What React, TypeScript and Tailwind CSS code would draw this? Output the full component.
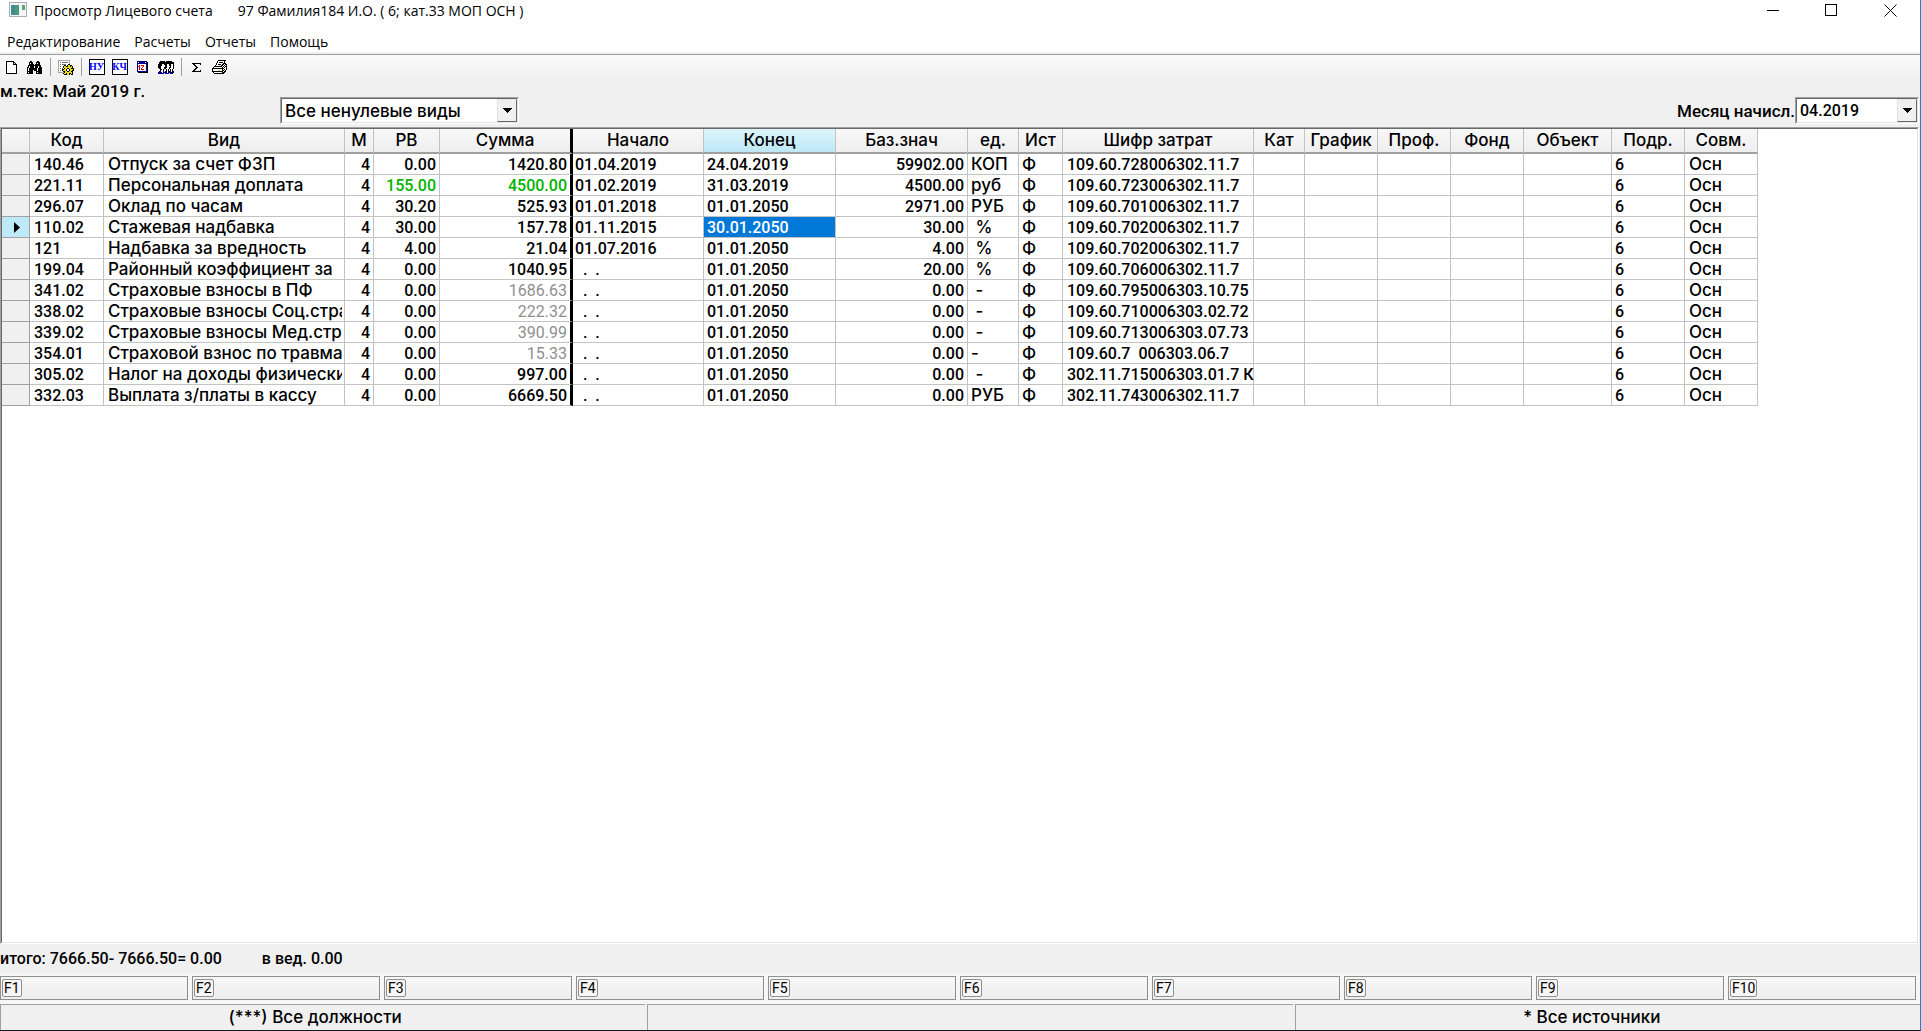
import React from 'react';

type Row = {
  code: string;
  name: string;
  pv: string;
  sum: string;
  start: string;
  end: string;
  base: string;
  unit: string;
  cipher: string;
  tone?: 'green' | 'gray';
};

const NO_DATE = '  .  .';

const rows: Row[] = [
  { code: '140.46', name: 'Отпуск за счет ФЗП', pv: '0.00', sum: '1420.80', start: '01.04.2019', end: '24.04.2019', base: '59902.00', unit: 'КОП', cipher: '109.60.728006302.11.7' },
  { code: '221.11', name: 'Персональная доплата', pv: '155.00', sum: '4500.00', start: '01.02.2019', end: '31.03.2019', base: '4500.00', unit: 'руб', cipher: '109.60.723006302.11.7', tone: 'green' },
  { code: '296.07', name: 'Оклад по часам', pv: '30.20', sum: '525.93', start: '01.01.2018', end: '01.01.2050', base: '2971.00', unit: 'РУБ', cipher: '109.60.701006302.11.7' },
  { code: '110.02', name: 'Стажевая надбавка', pv: '30.00', sum: '157.78', start: '01.11.2015', end: '30.01.2050', base: '30.00', unit: ' %', cipher: '109.60.702006302.11.7' },
  { code: '121', name: 'Надбавка за вредность', pv: '4.00', sum: '21.04', start: '01.07.2016', end: '01.01.2050', base: '4.00', unit: ' %', cipher: '109.60.702006302.11.7' },
  { code: '199.04', name: 'Районный коэффициент за', pv: '0.00', sum: '1040.95', start: NO_DATE, end: '01.01.2050', base: '20.00', unit: ' %', cipher: '109.60.706006302.11.7' },
  { code: '341.02', name: 'Страховые взносы в ПФ', pv: '0.00', sum: '1686.63', start: NO_DATE, end: '01.01.2050', base: '0.00', unit: ' -', cipher: '109.60.795006303.10.75', tone: 'gray' },
  { code: '338.02', name: 'Страховые взносы Соц.стра', pv: '0.00', sum: '222.32', start: NO_DATE, end: '01.01.2050', base: '0.00', unit: ' -', cipher: '109.60.710006303.02.72', tone: 'gray' },
  { code: '339.02', name: 'Страховые взносы Мед.стра', pv: '0.00', sum: '390.99', start: NO_DATE, end: '01.01.2050', base: '0.00', unit: ' -', cipher: '109.60.713006303.07.73', tone: 'gray' },
  { code: '354.01', name: 'Страховой взнос по травма', pv: '0.00', sum: '15.33', start: NO_DATE, end: '01.01.2050', base: '0.00', unit: '-', cipher: '109.60.7  006303.06.7', tone: 'gray' },
  { code: '305.02', name: 'Налог на доходы физически', pv: '0.00', sum: '997.00', start: NO_DATE, end: '01.01.2050', base: '0.00', unit: ' -', cipher: '302.11.715006303.01.7 К' },
  { code: '332.03', name: 'Выплата з/платы в кассу', pv: '0.00', sum: '6669.50', start: NO_DATE, end: '01.01.2050', base: '0.00', unit: 'РУБ', cipher: '302.11.743006302.11.7' },
];

const columns = [
  { title: '', width: 'w-[28px]' },
  { title: 'Код', width: 'w-[74px]' },
  { title: 'Вид', width: 'w-[241px]' },
  { title: 'М', width: 'w-[29px]' },
  { title: 'РВ', width: 'w-[66px]' },
  { title: 'Сумма', width: 'w-[133px]' },
  { title: 'Начало', width: 'w-[131px]' },
  { title: 'Конец', width: 'w-[132px]' },
  { title: 'Баз.знач', width: 'w-[132px]' },
  { title: 'ед.', width: 'w-[51px]' },
  { title: 'Ист', width: 'w-[44px]' },
  { title: 'Шифр затрат', width: 'w-[191px]' },
  { title: 'Кат', width: 'w-[51px]' },
  { title: 'График', width: 'w-[73px]' },
  { title: 'Проф.', width: 'w-[73px]' },
  { title: 'Фонд', width: 'w-[73px]' },
  { title: 'Объект', width: 'w-[88px]' },
  { title: 'Подр.', width: 'w-[73px]' },
  { title: 'Совм.', width: 'w-[73px]' },
];

const menu = ['Редактирование', 'Расчеты', 'Отчеты', 'Помощь'];
const fKeys = ['F1', 'F2', 'F3', 'F4', 'F5', 'F6', 'F7', 'F8', 'F9', 'F10'];

const wide = 'font-[Inter,sans-serif] text-[17px]';
const cellBase = 'h-[21px] p-0 border-b border-r border-[#c3c3c3] whitespace-pre';
const cell = `${cellBase} pt-0.5 leading-[18px]`;
const textCell = `${cellBase} leading-5 ${wide}`;
const sunken = 'border border-t-[#a0a0a0] border-l-[#a0a0a0] border-r-white border-b-white';
const sunkenInner = 'border border-t-[#696969] border-l-[#696969] border-r-[#e3e3e3] border-b-[#e3e3e3]';

const palette: Record<string, string> = {
  k: '#000000',
  w: '#ffffff',
  g: '#a8a8a8',
  d: '#707070',
  y: '#e8dc20',
  b: '#000090',
  r: '#d00000',
};

const pageArt = [
  'kkkkkkkk....',
  'kwwwwwwkk...',
  'kwwwwwwkwk..',
  'kwwwwwwkkkk.',
  'kwwwwwwwwwk.',
  'kwwwwwwwwwk.',
  'kwwwwwwwwwk.',
  'kwwwwwwwwwk.',
  'kwwwwwwwwwk.',
  'kwwwwwwwwwk.',
  'kwwwwwwwwwk.',
  'kwwwwwwwwwk.',
  'kkkkkkkkkkk.',
];

const binocularsArt = [
  '...kk.....kk...',
  '..kkkk...kkkk..',
  '..kwkk...kwkk..',
  '..kkkkk.kkkkk..',
  '.kkkkkkkkkkkkk.',
  '.kwkkkkwkkkwkk.',
  'kkwkkkkwkkkwkkk',
  'kwkkkkkkkkwkkkk',
  'kwkkkkkkkkwkkkk',
  'kwkkkk.kkkwkkkk',
  'kkkkkk...kkkkkk',
  'kwkkkk...kwkkkk',
  'kkkkkk...kkkkkk',
];

const docGearArt = [
  'gggggggggggg....',
  'gwwwwwwwwwwg....',
  'gwdwddddddwg....',
  'gwwwwwwwwwwg....',
  'gwdwddddwwkk....',
  'gwwwwwkkwkyykk..',
  'gwdwwkyykkyykyk.',
  'gwwwwkyyyyyyyyk.',
  'gwdwdwkyykkyykkk',
  'gwwwkkyykwwkyyyk',
  'gwdwkyyykwwkyykk',
  'gwwwwkkyykkyykk.',
  'ggggggkyyyyyyyk.',
  '.....kyykyykkyk.',
  '......kkkyyk.kk.',
];

const calendarArt = [
  'bbbbbbbbbb.',
  'bwbbbbbbwbk',
  'bbbbbbbbbbk',
  'bwwwwwwwwbk',
  'bwrwrrrwwbk',
  'brrwwwrwwbk',
  'bwrwwrwwwbk',
  'bwrwrwwwwbk',
  'bwrwrrrwwbk',
  'bwwwwwwwwbk',
  'bbbbbbbbbbk',
  '.kkkkkkkkkk',
];

const peopleArt = [
  '..kkkkk.kkkkkk..',
  '.kkkkkkkkkkkkkkk',
  '.kkkkkkkkkkkkkkk',
  'kkkkwwkkkwwkkwwk',
  'kkkkwwwkkwwkkwwk',
  'kkkwwwwkkwwwkwwk',
  'kkkwwwkkkwwkkwwk',
  '.kkwwwkkwwwkwwwk',
  '..kkwk..kwk.kwk.',
  '..kwwk..kwk.kwk.',
  '.bbwwk.bkwkbkwkb',
  'bbbbwkbbbwkbbkkb',
  'bbbbbb.bbbb.bbb.',
];

const sumArt = [
  'kkkkkkkkk',
  '.kk.....k',
  '..kk.....',
  '...kk....',
  '....kk...',
  '...kk....',
  '..kk.....',
  '.kk.....k',
  'kkkkkkkkk',
];

const printerArt = [
  '......kkkkkkkk..',
  '.....kwwwwwwk...',
  '.....kwkkkkwk...',
  '....kwwwwwwkkk..',
  '....kwkkkwkkwkk.',
  '...kwwwwwkkwkwk.',
  '..kkkkkkkkwkwkk.',
  '.kwwwwwwwwkwkwk.',
  'kkkkkkkkkkkkwwk.',
  'kwwwwwwwwwkwkwk.',
  'kwwwwwyywwkkwk..',
  'kkkkkkkkkkkwkk..',
  '.kwwwwwwwwkkk...',
  '..kkkkkkkkkk....',
];

const PixelIcon: React.FC<{ art: string[] }> = ({ art }) => (
  <svg width={art[0].length} height={art.length} shapeRendering="crispEdges">
    {art.flatMap((line, y) =>
      line.split('').map((ch, x) =>
        ch === '.' ? null : <rect key={`${x}-${y}`} x={x} y={y} width="1" height="1" fill={palette[ch]} />
      )
    )}
  </svg>
);

const ToolButton: React.FC<{ label: string; children: React.ReactNode }> = ({ label, children }) => (
  <button aria-label={label} className="flex h-6 w-[23px] items-center justify-center">
    {children}
  </button>
);

const Separator = () => (
  <div className="flex w-2 justify-center">
    <div className="h-[18px] w-px bg-[#a0a0a0]" />
  </div>
);

const LetterIcon: React.FC<{ text: string }> = ({ text }) => (
  <span className="flex h-4 w-4 items-center justify-center border border-black bg-white font-['Liberation_Serif',serif] text-[10px] leading-none font-bold text-[#0000ff]">
    {text}
  </span>
);

const ComboBox: React.FC<{ id: string; value: string; width: string; font?: string; label?: string }> = ({
  id,
  value,
  width,
  font = '',
  label,
}) => (
  <div className={`relative ${width} ${sunken}`}>
    <select
      id={id}
      aria-label={label}
      className={`block h-[25px] w-full appearance-none bg-white pt-px pl-[3px] leading-5 outline-none ${font} ${sunkenInner}`}
    >
      <option>{value}</option>
    </select>
    <span className="pointer-events-none absolute top-px right-px flex h-[23px] w-5 items-center justify-center border border-t-[#e3e3e3] border-r-[#696969] border-b-[#696969] border-l-[#e3e3e3] bg-[#f0f0f0]">
      <svg width="9" height="5" viewBox="0 0 9 5" shapeRendering="crispEdges">
        <path d="M0 0h9v1H8v1H7v1H6v1H5v1H4V4H3V3H2V2H1V1H0z" />
      </svg>
    </span>
  </div>
);

const DataGrid = () => (
  <table className="w-px table-fixed border-separate border-spacing-0">
    <colgroup>
      {columns.map((c, i) => (
        <col key={i} className={c.width} />
      ))}
    </colgroup>
    <thead>
      <tr>
        {columns.map((c, i) => (
          <th
            key={i}
            className={`h-[25px] border-b-2 border-b-[#a0a0a0] p-0 pb-0.5 text-center leading-5 font-medium whitespace-nowrap ${wide} ${
              i === 5 ? 'border-r-[3px] border-r-black' : 'border-r border-r-[#c3c3c3]'
            } ${i === 7 ? 'bg-linear-to-b from-[#ddf5fc] to-[#bde8f6]' : 'bg-linear-to-b from-[#f8f8f8] to-[#eeeeee]'}`}
          >
            {c.title}
          </th>
        ))}
      </tr>
    </thead>
    <tbody>
      {rows.map((r, i) => {
        const current = i === 3;
        return (
          <tr key={r.code}>
            <td className={`h-[21px] border-r border-b border-[#a0a0a0] p-0 ${current ? 'bg-[#bde9f8]' : 'bg-[#f0f0f0]'}`}>
              {current && (
                <svg className="ml-3" width="6" height="11" viewBox="0 0 6 11">
                  <path d="M0 0l6 5.5L0 11z" />
                </svg>
              )}
            </td>
            <td className={`${cell} pl-1`}>{r.code}</td>
            <td className={`${textCell} pl-1`}>
              <div className="mr-0.5 overflow-x-clip">{r.name}</div>
            </td>
            <td className={`${cell} pr-[3px] text-right`}>4</td>
            <td className={`${cell} pr-[3px] text-right ${r.tone === 'green' ? 'text-[#00b400]' : ''}`}>{r.pv}</td>
            <td
              className={`h-[21px] border-r-[3px] border-b border-r-black border-b-[#c3c3c3] p-0 pt-0.5 pr-[3px] text-right leading-[18px] ${
                r.tone === 'green' ? 'text-[#00b400]' : r.tone === 'gray' ? 'font-normal text-[#8f8f8f]' : ''
              }`}
            >
              {r.sum}
            </td>
            <td className={`${cell} pl-0.5`}>{r.start}</td>
            <td className={`${cell} pl-[3px] ${current ? 'bg-[#0078d7] text-white' : ''}`}>{r.end}</td>
            <td className={`${cell} pr-[3px] text-right`}>{r.base}</td>
            <td className={`${textCell} pl-[3px]`}>{r.unit}</td>
            <td className={`${textCell} pl-[3px]`}>Ф</td>
            <td className={`${cell} pl-1`}>{r.cipher}</td>
            <td className={cell} />
            <td className={cell} />
            <td className={cell} />
            <td className={cell} />
            <td className={cell} />
            <td className={`${cell} pl-[3px]`}>6</td>
            <td className={`${textCell} pl-1`}>Осн</td>
          </tr>
        );
      })}
    </tbody>
  </table>
);

const App: React.FC = () => {
  return (
    <div className="flex h-screen flex-col border-r border-b border-r-[#1a84dc] border-b-[#0c1c2c] bg-[#f0f0f0] font-[Roboto,sans-serif] text-[16px] font-medium text-black">
      <header className="bg-white font-['Open_Sans',sans-serif] text-[14px] font-normal">
        <div className="flex h-5 items-center">
          <svg className="ml-[9px] h-4 w-[18px]" viewBox="0 0 18 16">
            <rect x="0.5" y="0.5" width="17" height="14" fill="#f4f6f7" stroke="#a9b0b4" />
            <rect x="2" y="3" width="8" height="10" fill="#4a9a7c" />
            <rect x="2" y="3" width="4" height="10" fill="#3d7fa0" opacity="0.5" />
            <rect x="13" y="3" width="3" height="5" fill="#5aa86e" />
          </svg>
          <h1 className="ml-[7px]">Просмотр Лицевого счета</h1>
          <span className="ml-[25px]">97 Фамилия184 И.О. ( 6; кат.33 МОП ОСН )</span>
          <div className="ml-auto flex">
            <button aria-label="Свернуть" className="flex h-5 w-[58px] items-center justify-center">
              <svg width="13" height="13" viewBox="0 0 13 13" shapeRendering="crispEdges">
                <path d="M0 6h12v1H0z" />
              </svg>
            </button>
            <button aria-label="Развернуть" className="flex h-5 w-[58px] items-center justify-center">
              <svg width="13" height="13" viewBox="0 0 13 13" shapeRendering="crispEdges">
                <path d="M0 0h12v12H0zM1 1v10h10V1z" fillRule="evenodd" />
              </svg>
            </button>
            <button aria-label="Закрыть" className="flex h-5 w-[60px] items-center justify-center">
              <svg width="13" height="13" viewBox="0 0 13 13" stroke="#000">
                <path d="M0.5 0.5l12 12M12.5 0.5l-12 12" />
              </svg>
            </button>
          </div>
        </div>
        <nav className="flex h-8 items-end gap-3.5 pl-[7px] leading-5">
          {menu.map((m) => (
            <button key={m}>{m}</button>
          ))}
        </nav>
      </header>
      <div className="h-[3px] border-b border-[#a0a0a0]" />

      <div className="flex h-6 items-center bg-linear-to-b from-[#fafafa] to-[#f0f0f0]">
        <ToolButton label="Новый"><PixelIcon art={pageArt} /></ToolButton>
        <ToolButton label="Поиск"><PixelIcon art={binocularsArt} /></ToolButton>
        <Separator />
        <ToolButton label="Настройка"><PixelIcon art={docGearArt} /></ToolButton>
        <Separator />
        <ToolButton label="НУ"><LetterIcon text="НУ" /></ToolButton>
        <ToolButton label="КЧ"><LetterIcon text="КЧ" /></ToolButton>
        <ToolButton label="Календарь"><PixelIcon art={calendarArt} /></ToolButton>
        <ToolButton label="Сотрудники"><PixelIcon art={peopleArt} /></ToolButton>
        <Separator />
        <ToolButton label="Сумма"><PixelIcon art={sumArt} /></ToolButton>
        <ToolButton label="Печать"><PixelIcon art={printerArt} /></ToolButton>
      </div>

      <div className="flex h-12 items-end pb-[3px]">
        <p className="w-[280px] self-start pt-0.5 text-[17px] leading-5">м.тек: Май 2019 г.</p>
        <ComboBox id="kinds" label="Виды" value="Все ненулевые виды" width="w-[239px]" font={wide} />
        <label htmlFor="month" className="ml-auto pb-[3px] text-[17px] leading-5">Месяц начисл.</label>
        <div className="pr-px">
          <ComboBox id="month" value="04.2019" width="w-[124px]" />
        </div>
      </div>

      <main className={`mr-px flex min-h-0 flex-1 flex-col ${sunken}`}>
        <div className={`flex-1 overflow-hidden bg-white ${sunkenInner}`}>
          <DataGrid />
        </div>
      </main>

      <footer>
        <p className="flex h-[30px] items-center gap-10 leading-5">
          <span>итого: 7666.50- 7666.50= 0.00</span>
          <span>в вед. 0.00</span>
        </p>
        <div className="flex gap-1 bg-[#f6f6f6] pt-0.5 pr-1 pb-1">
          {fKeys.map((k) => (
            <button key={k} className="flex h-6 flex-1 items-center border border-[#8f8f8f] bg-linear-to-b from-[#f7f7f7] to-[#eeeeee] pl-px">
              <span className="rounded-[2px] border border-[#8f8f8f] bg-[#f6f6f6] px-px text-[14px] leading-4 font-normal">{k}</span>
            </button>
          ))}
        </div>
        <div className={`grid h-[26px] grid-cols-[647fr_647fr_627fr] gap-0.5 text-center leading-6 ${wide}`}>
          <div className="border-t border-l border-[#a0a0a0] pr-4">(***) Все должности</div>
          <div className="border-t border-l border-[#a0a0a0]" />
          <div className="border-t border-l border-[#a0a0a0] pr-8">* Все источники</div>
        </div>
      </footer>
    </div>
  );
};

export default App;
